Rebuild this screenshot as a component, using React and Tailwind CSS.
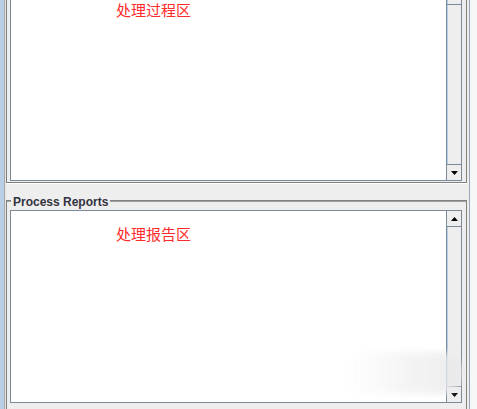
import React from 'react';

const cjk = { fontFamily: '"Noto Sans CJK SC", "Noto Sans", sans-serif' };

function Arrow({ up }) {
  return (
    <svg width="7" height="4" viewBox="0 0 7 4" className="block">
      {up ? <path d="M3.5 0 L7 4 L0 4 Z" fill="#000" /> : <path d="M0 0 L7 0 L3.5 4 Z" fill="#000" />}
    </svg>
  );
}

function ArrowButton({ up }) {
  return (
    <div
      className={`h-[16px] shrink-0 bg-[#eeeeee] flex items-center justify-center ${
        up ? 'border-b border-[#7a8a99]' : 'border-t border-[#7a8a99]'
      }`}
    >
      <Arrow up={up} />
    </div>
  );
}

export default function App() {
  return (
    <div className="relative w-[477px] h-[409px] overflow-hidden bg-[#eeeeee] flex" style={{ fontFamily: '"Liberation Sans", Arial, sans-serif' }}>
      {/* left window edge */}
      <div className="w-[4px] shrink-0 bg-[#b8cfe5]" />
      <div className="w-[1px] shrink-0 bg-[#a8a8a8]" />
      <div className="w-[1px] shrink-0 bg-[#e4e4e4]" />

      <div className="w-[461px] shrink-0 flex flex-col">
        {/* upper group (title out of view) */}
        <div className="h-[183px] shrink-0 border-l border-r border-b border-[#808080] pl-[3px] pr-[4px] pb-[1px] flex">
          <div className="flex-1 flex border-l border-r border-b border-[#7a8a99] bg-white">
            <div className="flex-1 pl-[105px] pt-[2px]">
              <div className="text-[15px] leading-[15px] text-[#ff2a2a]" style={cjk}>处理过程区</div>
            </div>
            <div className="w-[15px] shrink-0 border-l border-[#7a8a99] flex flex-col bg-[#eeeeee]">
              <div className="h-[4px] shrink-0 border-l border-[#b8cfe5]" />
              <div className="h-[1px] shrink-0 bg-[#7a8a99]" />
              <div className="flex-1 border-l border-[#b8cfe5]" />
              <ArrowButton />
            </div>
          </div>
        </div>
        <div className="h-[1px] shrink-0 bg-white" />

        <div className="h-[16px] shrink-0" />

        {/* lower titled group */}
        <div className="relative flex-1 border-l border-r border-t border-[#808080] shadow-[inset_0_1px_0_#a0a0a0] pl-[3px] pr-[4px] pt-[9px] flex flex-col">
          <div className="absolute left-[4px] top-[-6px] px-[2px] bg-[#eeeeee] text-[12px] leading-[14px] font-bold text-[#333340]">
            Process Reports
          </div>
          <div className="h-[193px] shrink-0 flex border border-[#7a8a99] bg-white">
            <div className="flex-1 pl-[105px] pt-[15px]">
              <div className="text-[15px] leading-[15px] text-[#ff2a2a]" style={cjk}>处理报告区</div>
            </div>
            <div className="w-[15px] shrink-0 border-l border-[#7a8a99] flex flex-col bg-[#eeeeee]">
              <ArrowButton up />
              <div className="flex-1 border-l border-[#b8cfe5]" />
              <ArrowButton />
            </div>
          </div>
        </div>
      </div>

      {/* right window edge */}
      <div className="w-[2px] shrink-0 bg-[#eeeeee]" />
      <div className="w-[1px] shrink-0 bg-[#9aa6b8]" />
      <div className="flex-1 bg-[#f7f7f7]" />

      {/* faint smudge over the lower area */}
      <div className="absolute left-[345px] top-[352px] w-[118px] h-[42px] rounded-full bg-gradient-to-r from-transparent via-[#f3f3f3] to-[#e8e8ea] blur-[3px] opacity-80" />
    </div>
  );
}
